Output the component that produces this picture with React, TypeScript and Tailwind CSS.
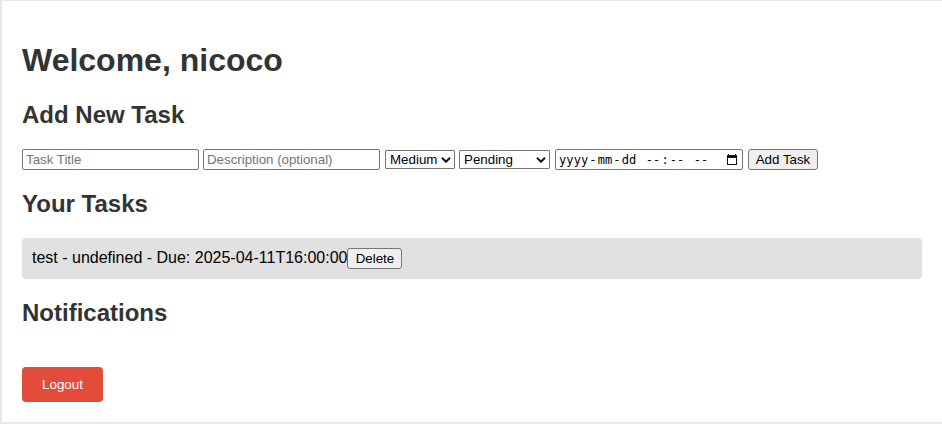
import React from "react";

const field = "h-[21px] rounded-[2px] border border-[#767676] bg-white px-[3px] text-[13.333px] leading-[15px] tracking-[-0.02px] placeholder:text-[#757575]";
const button = "h-[21px] rounded-[3px] border border-[#767676] bg-[#efefef] text-[13.333px] leading-[15px] text-black";
const heading = "text-2xl font-bold leading-7 text-[#333333]";

function Select({ value, className }: { value: string; className: string }) {
  return (
    <button className={`relative flex h-[19px] items-center rounded-[1px] border border-[#767676] bg-white pl-[4px] text-[13.333px] leading-[15px] text-black ${className}`}>
      {value}
      <svg className="absolute right-[3px] top-[6px]" width="10" height="6" viewBox="0 0 10 6" fill="none" stroke="#111" strokeWidth="2">
        <path d="M1 .7l4 4 4-4" />
      </svg>
    </button>
  );
}

const dateParts = ["yyyy", "-", "mm", "-", "dd", " ", "--", ":", "--", " ", "--"];

export default function App() {
  return (
    <div className="h-[424px] overflow-hidden bg-[#e8e8e8] pl-[2px] pt-px font-['Liberation_Sans',Arial,sans-serif]">
      <main className="h-[421px] bg-white pl-5 pt-[41px]">
        <h1 className="text-[32px] font-bold leading-9 text-[#333333]">Welcome, nicoco</h1>
        <h2 className={`mt-[23px] ${heading}`}>Add New Task</h2>
        <form className="mt-5 flex h-[21px] items-center" onSubmit={(e) => e.preventDefault()}>
          <input className={`w-[177px] ${field}`} placeholder="Task Title" />
          <input className={`ml-1 w-[177px] ${field}`} placeholder="Description (optional)" />
          <Select value="Medium" className="ml-[5px] w-[70px]" />
          <Select value="Pending" className="ml-1 w-[91px]" />
          <div className="ml-[5px] flex h-[21px] w-[188px] items-center justify-between rounded-[2px] border border-[#767676] bg-white pl-[2px] pr-[3px] font-['DejaVu_Sans_Mono',monospace] text-[12px] leading-[15px] tracking-[0.11px]">
            <div className="flex whitespace-pre pt-px">
              {dateParts.map((part, i) => (
                <span key={i} className={i % 2 === 0 ? "px-px" : ""}>{part}</span>
              ))}
            </div>
            <svg className="mr-[2px]" width="10" height="11" viewBox="0 0 10 11" fill="#111">
              <path d="M0 1h1V0h1v1h6V0h1v1h1v10H0zM1 4v6h8V4z" fillRule="evenodd" />
            </svg>
          </div>
          <button className={`ml-[5px] w-[70px] ${button}`}>Add Task</button>
        </form>
        <h2 className={`mt-5 ${heading}`}>Your Tasks</h2>
        <div className="mr-5 mt-5 flex h-[41px] items-center rounded bg-[#e1e1e1] pl-[10px]">
          <span className="whitespace-nowrap pb-0.5 text-base text-black">test - undefined - Due: 2025-04-11T16:00:00</span>
          <button className={`w-[55px] ${button}`}>Delete</button>
        </div>
        <h2 className={`mt-5 ${heading}`}>Notifications</h2>
        <button className="mt-10 block h-[35px] w-[81px] rounded bg-[#e34c3a] text-[13.333px] leading-[15px] text-white">Logout</button>
      </main>
    </div>
  );
}
